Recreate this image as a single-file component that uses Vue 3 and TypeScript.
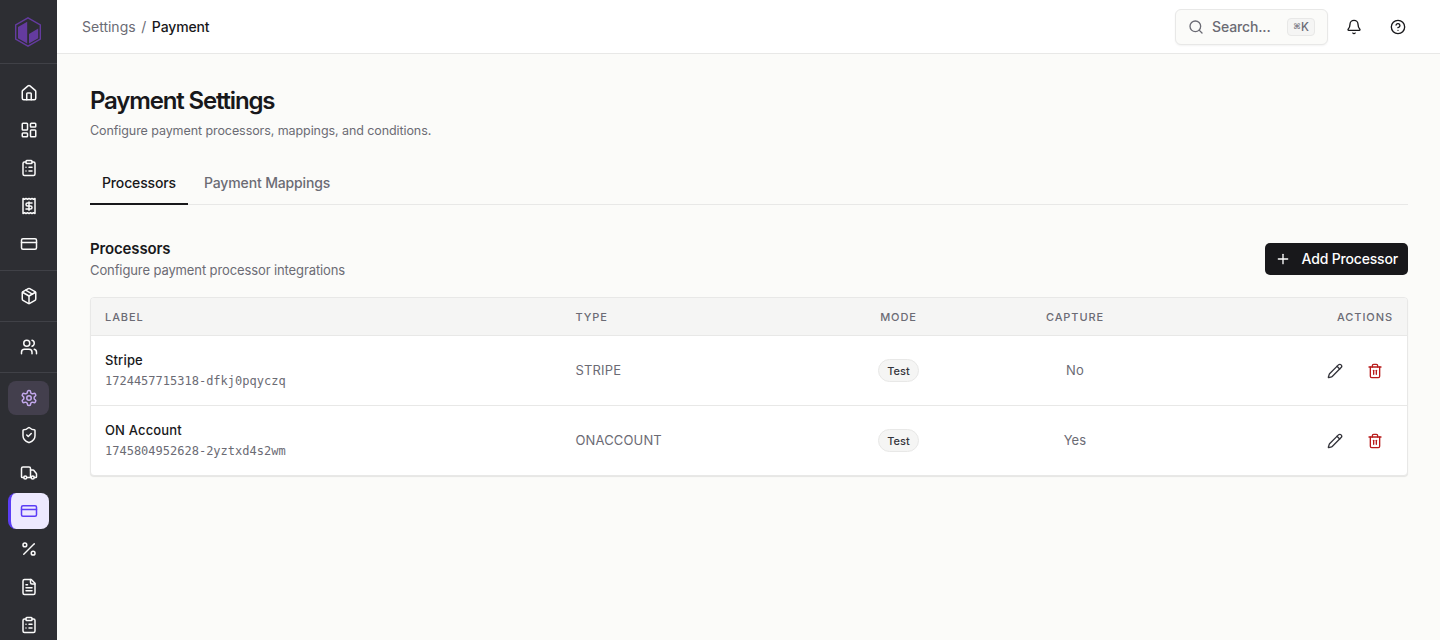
<script setup lang="ts">
interface NavItem {
  icon: string
  state?: 'parent' | 'active'
}

interface Processor {
  label: string
  id: string
  type: string
  mode: string
  capture: string
}

const icons: Record<string, string> = {
  home: '<path d="M15 21v-8a1 1 0 0 0-1-1h-4a1 1 0 0 0-1 1v8"/><path d="M3 10a2 2 0 0 1 .709-1.528l7-5.999a2 2 0 0 1 2.582 0l7 5.999A2 2 0 0 1 21 10v9a2 2 0 0 1-2 2H5a2 2 0 0 1-2-2z"/>',
  dashboard: '<rect width="7" height="9" x="3" y="3" rx="1"/><rect width="7" height="5" x="14" y="3" rx="1"/><rect width="7" height="9" x="14" y="12" rx="1"/><rect width="7" height="5" x="3" y="16" rx="1"/>',
  clipboard: '<rect width="8" height="4" x="8" y="2" rx="1"/><path d="M16 4h2a2 2 0 0 1 2 2v14a2 2 0 0 1-2 2H6a2 2 0 0 1-2-2V6a2 2 0 0 1 2-2h2"/><path d="M12 11h4"/><path d="M12 16h4"/><path d="M8 11h.01"/><path d="M8 16h.01"/>',
  receipt: '<path d="M4 2v20l2-1 2 1 2-1 2 1 2-1 2 1 2-1 2 1V2l-2 1-2-1-2 1-2-1-2 1-2-1-2 1Z"/><path d="M16 8h-6a2 2 0 1 0 0 4h4a2 2 0 1 1 0 4H8"/><path d="M12 17.5v-11"/>',
  card: '<rect width="20" height="14" x="2" y="5" rx="2"/><path d="M2 10h20"/>',
  package: '<path d="M11 21.73a2 2 0 0 0 2 0l7-4A2 2 0 0 0 21 16V8a2 2 0 0 0-1-1.73l-7-4a2 2 0 0 0-2 0l-7 4A2 2 0 0 0 3 8v8a2 2 0 0 0 1 1.73z"/><path d="M12 22V12"/><path d="M3.29 7 12 12l8.71-5"/><path d="m7.5 4.27 9 5.15"/>',
  users: '<path d="M16 21v-2a4 4 0 0 0-4-4H6a4 4 0 0 0-4 4v2"/><circle cx="9" cy="7" r="4"/><path d="M22 21v-2a4 4 0 0 0-3-3.87"/><path d="M16 3.13a4 4 0 0 1 0 7.75"/>',
  settings: '<path d="M12.22 2h-.44a2 2 0 0 0-2 2v.18a2 2 0 0 1-1 1.73l-.43.25a2 2 0 0 1-2 0l-.15-.08a2 2 0 0 0-2.73.73l-.22.38a2 2 0 0 0 .73 2.73l.15.1a2 2 0 0 1 1 1.72v.51a2 2 0 0 1-1 1.74l-.15.09a2 2 0 0 0-.73 2.73l.22.38a2 2 0 0 0 2.73.73l.15-.08a2 2 0 0 1 2 0l.43.25a2 2 0 0 1 1 1.73V20a2 2 0 0 0 2 2h.44a2 2 0 0 0 2-2v-.18a2 2 0 0 1 1-1.73l.43-.25a2 2 0 0 1 2 0l.15.08a2 2 0 0 0 2.73-.73l.22-.39a2 2 0 0 0-.73-2.73l-.15-.08a2 2 0 0 1-1-1.74v-.5a2 2 0 0 1 1-1.74l.15-.09a2 2 0 0 0 .73-2.73l-.22-.38a2 2 0 0 0-2.73-.73l-.15.08a2 2 0 0 1-2 0l-.43-.25a2 2 0 0 1-1-1.73V4a2 2 0 0 0-2-2z"/><circle cx="12" cy="12" r="3"/>',
  shield: '<path d="M20 13c0 5-3.5 7.5-7.66 8.95a1 1 0 0 1-.67-.01C7.5 20.5 4 18 4 13V6a1 1 0 0 1 1-1c2 0 4.5-1.2 6.24-2.72a1.17 1.17 0 0 1 1.52 0C14.51 3.81 17 5 19 5a1 1 0 0 1 1 1z"/><path d="m9 12 2 2 4-4"/>',
  truck: '<path d="M14 18V6a2 2 0 0 0-2-2H4a2 2 0 0 0-2 2v11a1 1 0 0 0 1 1h2"/><path d="M15 18H9"/><path d="M19 18h2a1 1 0 0 0 1-1v-3.65a1 1 0 0 0-.22-.624l-3.48-4.35A1 1 0 0 0 17.52 8H14"/><circle cx="17" cy="18" r="2"/><circle cx="7" cy="18" r="2"/>',
  percent: '<path d="M19 5 5 19"/><circle cx="6.5" cy="6.5" r="2.5"/><circle cx="17.5" cy="17.5" r="2.5"/>',
  file: '<path d="M15 2H6a2 2 0 0 0-2 2v16a2 2 0 0 0 2 2h12a2 2 0 0 0 2-2V7Z"/><path d="M14 2v4a2 2 0 0 0 2 2h4"/><path d="M10 9H8"/><path d="M16 13H8"/><path d="M16 17H8"/>',
  search: '<circle cx="11" cy="11" r="8"/><path d="m21 21-4.3-4.3"/>',
  bell: '<path d="M10.268 21a2 2 0 0 0 3.464 0"/><path d="M3.262 15.326A1 1 0 0 0 4 17h16a1 1 0 0 0 .74-1.673C19.41 13.956 18 12.499 18 8A6 6 0 0 0 6 8c0 4.499-1.411 5.956-2.738 7.326"/>',
  help: '<circle cx="12" cy="12" r="10"/><path d="M9.09 9a3 3 0 0 1 5.83 1c0 2-3 3-3 3"/><path d="M12 17h.01"/>',
  plus: '<path d="M5 12h14"/><path d="M12 5v14"/>',
  pencil: '<path d="M21.174 6.812a1 1 0 0 0-3.986-3.987L3.842 16.174a2 2 0 0 0-.5.83l-1.321 4.352a.5.5 0 0 0 .623.622l4.353-1.32a2 2 0 0 0 .83-.497z"/><path d="m15 5 4 4"/>',
  trash: '<path d="M3 6h18"/><path d="M19 6v14a2 2 0 0 1-2 2H7a2 2 0 0 1-2-2V6"/><path d="M8 6V4a2 2 0 0 1 2-2h4a2 2 0 0 1 2 2v2"/><path d="M10 11v6"/><path d="M14 11v6"/>',
}

const groups: NavItem[][] = [
  [{ icon: 'home' }, { icon: 'dashboard' }, { icon: 'clipboard' }, { icon: 'receipt' }, { icon: 'card' }],
  [{ icon: 'package' }],
  [{ icon: 'users' }],
  [
    { icon: 'settings', state: 'parent' },
    { icon: 'shield' },
    { icon: 'truck' },
    { icon: 'card', state: 'active' },
    { icon: 'percent' },
    { icon: 'file' },
    { icon: 'clipboard' },
  ],
]

const processors: Processor[] = [
  { label: 'Stripe', id: '1724457715318-dfkj0pqyczq', type: 'STRIPE', mode: 'Test', capture: 'No' },
  { label: 'ON Account', id: '1745804952628-2yztxd4s2wm', type: 'ONACCOUNT', mode: 'Test', capture: 'Yes' },
]
</script>

<template>
  <div class="app">
    <aside class="sidebar">
      <div class="brand">
        <svg class="logo" viewBox="0 0 28 32">
          <path class="logo-line" d="M14 1.8 26.3 8.9v14.2L14 30.2 1.7 23.1V8.9z" />
          <path class="logo-fill" d="M13.2 5.8v21.8L4 22.3V11zM15 18l9.2-5.4v9.7L15 27.6z" />
        </svg>
      </div>
      <nav>
        <div v-for="(group, g) in groups" :key="g" class="group">
          <a v-for="(item, i) in group" :key="i" class="nav-item" :class="item.state">
            <svg class="icon nav-icon" viewBox="0 0 24 24" v-html="icons[item.icon]" />
          </a>
        </div>
      </nav>
    </aside>

    <div class="page">
      <header class="topbar">
        <div class="crumbs">
          <span>Settings</span><span class="slash">/</span><strong>Payment</strong>
        </div>
        <div class="tools">
          <button class="search">
            <svg class="icon search-icon" viewBox="0 0 24 24" v-html="icons.search" />
            <span class="search-text">Search...</span>
            <kbd><span class="cmd">⌘</span>K</kbd>
          </button>
          <svg class="icon tool-icon" viewBox="0 0 24 24" v-html="icons.bell" />
          <svg class="icon tool-icon" viewBox="0 0 24 24" v-html="icons.help" />
        </div>
      </header>

      <main>
        <h1>Payment Settings</h1>
        <p class="lead">Configure payment processors, mappings, and conditions.</p>

        <div class="tabs">
          <a class="tab current">Processors</a>
          <a class="tab">Payment Mappings</a>
        </div>

        <section class="section-head">
          <div>
            <h2>Processors</h2>
            <p class="sub">Configure payment processor integrations</p>
          </div>
          <button class="add">
            <svg class="icon add-icon" viewBox="0 0 24 24" v-html="icons.plus" />
            <span>Add Processor</span>
          </button>
        </section>

        <div class="table">
          <div class="row head">
            <span>LABEL</span>
            <span>TYPE</span>
            <span class="center">MODE</span>
            <span class="center">CAPTURE</span>
            <span class="right">ACTIONS</span>
          </div>
          <div v-for="p in processors" :key="p.id" class="row body">
            <div>
              <div class="name">{{ p.label }}</div>
              <div class="pid">{{ p.id }}</div>
            </div>
            <span class="muted">{{ p.type }}</span>
            <span class="center"><span class="badge">{{ p.mode }}</span></span>
            <span class="muted center">{{ p.capture }}</span>
            <div class="actions">
              <svg class="icon row-icon" viewBox="0 0 24 24" v-html="icons.pencil" />
              <svg class="icon row-icon danger" viewBox="0 0 24 24" v-html="icons.trash" />
            </div>
          </div>
        </div>
      </main>
    </div>
  </div>
</template>

<style>
body {
  overflow: hidden;
}
</style>

<style scoped>
.app {
  display: flex;
  height: 640px;
  overflow: hidden;
  background: #fbfbf9;
  color: #18181b;
  font-family: Inter, "Liberation Sans", sans-serif;
  font-size: 14px;
}
* {
  box-sizing: border-box;
}
h1, h2, p {
  margin: 0;
}
button {
  font: inherit;
}
.icon {
  display: block;
  flex: none;
  fill: none;
  stroke: currentColor;
  stroke-width: 2;
  stroke-linecap: round;
  stroke-linejoin: round;
}
.sidebar {
  width: 57px;
  flex: none;
  height: 640px;
  overflow: hidden;
  background: #2d2e33;
  color: #fafafa;
}
.brand {
  height: 64px;
  border-bottom: 1px solid #404147;
  display: flex;
  align-items: center;
  justify-content: center;
}
.logo {
  width: 28px;
  height: 32px;
  margin-right: 1px;
}
.logo-line {
  fill: none;
  stroke: #643b9f;
  stroke-width: 1.4;
}
.logo-fill {
  fill: #643b9f;
}
.group {
  display: flex;
  flex-direction: column;
  gap: 1.9px;
  padding: 7px 8px;
}
.group:first-child {
  padding: 10.5px 8px 8px;
}
.group + .group {
  border-top: 1px solid #404147;
}
.group:last-child {
  gap: 2px;
  padding-top: 8px;
}
.nav-item {
  height: 36px;
  flex: none;
  display: flex;
  align-items: center;
  justify-content: center;
  border-radius: 8px;
}
.nav-icon {
  width: 18px;
  height: 18px;
}
.parent {
  height: 34px;
  background: #433f4d;
  color: #c4a9ee;
}
.active {
  background: #ede9fe;
  color: #5b3df5;
  border-left: 3px solid #5b3df5;
  padding-right: 3px;
}
.page {
  flex: 1;
  min-width: 0;
}
.topbar {
  height: 54px;
  padding: 0 34px 0 25px;
  display: flex;
  align-items: center;
  justify-content: space-between;
  background: #fff;
  border-bottom: 1px solid #e8e8e7;
}
.crumbs {
  display: flex;
  gap: 5.6px;
  color: #6b6b74;
  line-height: 20px;
}
.crumbs strong {
  color: #18181b;
  font-weight: 500;
  letter-spacing: -0.13px;
}
.tools {
  display: flex;
  align-items: center;
}
.search {
  display: flex;
  align-items: center;
  width: 153px;
  height: 36px;
  padding: 0 12px;
  background: #fbfbf9;
  border: 1px solid #e8e8e7;
  border-radius: 6px;
  color: #6b6b74;
  box-shadow: 0 1px 2px rgba(0, 0, 0, 0.05);
}
.search-icon {
  width: 16px;
  height: 16px;
}
.search-text {
  margin-left: 8px;
  font-weight: 500;
  letter-spacing: -0.13px;
}
kbd {
  display: flex;
  align-items: center;
  justify-content: center;
  margin-left: auto;
  width: 28px;
  height: 18px;
  border: 1px solid #e8e8e7;
  border-radius: 4px;
  background: #f5f5f4;
  font-family: Inter, sans-serif;
  font-size: 11.5px;
  font-weight: 500;
  line-height: 16px;
}
.cmd {
  font-family: "DejaVu Sans", sans-serif;
  font-size: 8px;
  font-weight: 400;
}
.tool-icon {
  width: 16px;
  height: 16px;
  margin-left: 28px;
}
.search + .tool-icon {
  margin-left: 18px;
}
main {
  padding: 32px 32px 0 33px;
}
h1 {
  font-size: 24px;
  line-height: 30px;
  font-weight: 600;
  letter-spacing: -1.16px;
}
.lead {
  margin-top: 5px;
  font-size: 12.5px;
  line-height: 20px;
  letter-spacing: -0.08px;
  color: #6b6b74;
}
.tabs {
  display: flex;
  gap: 4px;
  height: 42px;
  margin-top: 22px;
  border-bottom: 1px solid #e8e8e7;
}
.tab {
  height: 42px;
  padding: 11px 12px 0;
  line-height: 18px;
  font-weight: 500;
  letter-spacing: -0.14px;
  color: #6b6b74;
}
.current {
  color: #18181b;
  border-bottom: 2px solid #18181b;
}
.section-head {
  display: flex;
  align-items: center;
  justify-content: space-between;
  margin-top: 33px;
  height: 42px;
}
h2 {
  padding-top: 1px;
  font-size: 15px;
  line-height: 22px;
  font-weight: 600;
  letter-spacing: -0.14px;
}
.sub {
  font-size: 13px;
  line-height: 21px;
  letter-spacing: -0.11px;
  color: #6b6b74;
}
.add {
  display: flex;
  align-items: center;
  justify-content: space-between;
  width: 143px;
  height: 32px;
  padding: 0 10px;
  border: 0;
  border-radius: 5px;
  background: #18181b;
  color: #fff;
  font-weight: 500;
  line-height: 18px;
  letter-spacing: -0.17px;
}
.add span {
  margin-top: -1px;
}
.add-icon {
  width: 16px;
  height: 16px;
}
.table {
  margin-top: 17px;
  background: #fff;
  border: 1px solid #e8e8e7;
  border-radius: 4px;
  overflow: hidden;
  box-shadow: 0 1px 1px rgba(0, 0, 0, 0.09);
}
.row {
  display: grid;
  grid-template-columns: 470.5px 241px 164px 189px 1fr;
  align-items: center;
  padding: 0 14px;
}
.head {
  height: 38px;
  background: #f5f5f4;
  border-bottom: 1px solid #e8e8e7;
  color: #6b6b74;
  font-size: 11px;
  font-weight: 500;
  letter-spacing: 0.92px;
}
.body {
  height: 69px;
}
.body + .body {
  height: 70px;
  border-top: 1px solid #e8e8e7;
}
.center {
  text-align: center;
}
.right {
  text-align: right;
}
.name {
  font-size: 13px;
  font-weight: 500;
  line-height: 18px;
  padding-bottom: 2px;
  letter-spacing: 0.15px;
}
.pid {
  font-family: "DejaVu Sans Mono", monospace;
  font-size: 12px;
  line-height: 20px;
  color: #6b6b74;
}
.muted {
  font-size: 13px;
  line-height: 18px;
  padding-bottom: 1px;
  letter-spacing: 0.15px;
  color: #6b6b74;
}
.badge {
  display: block;
  width: 41px;
  height: 23px;
  margin: 0 auto;
  border: 1px solid #e8e8e7;
  border-radius: 12px;
  background: #f5f5f4;
  color: #34343b;
  font-size: 11px;
  font-weight: 500;
  line-height: 22px;
}
.actions {
  display: flex;
  justify-content: flex-end;
  gap: 24px;
  padding-right: 10px;
  color: #34343b;
}
.row-icon {
  width: 16px;
  height: 16px;
}
.danger {
  color: #b91c1c;
}
</style>
